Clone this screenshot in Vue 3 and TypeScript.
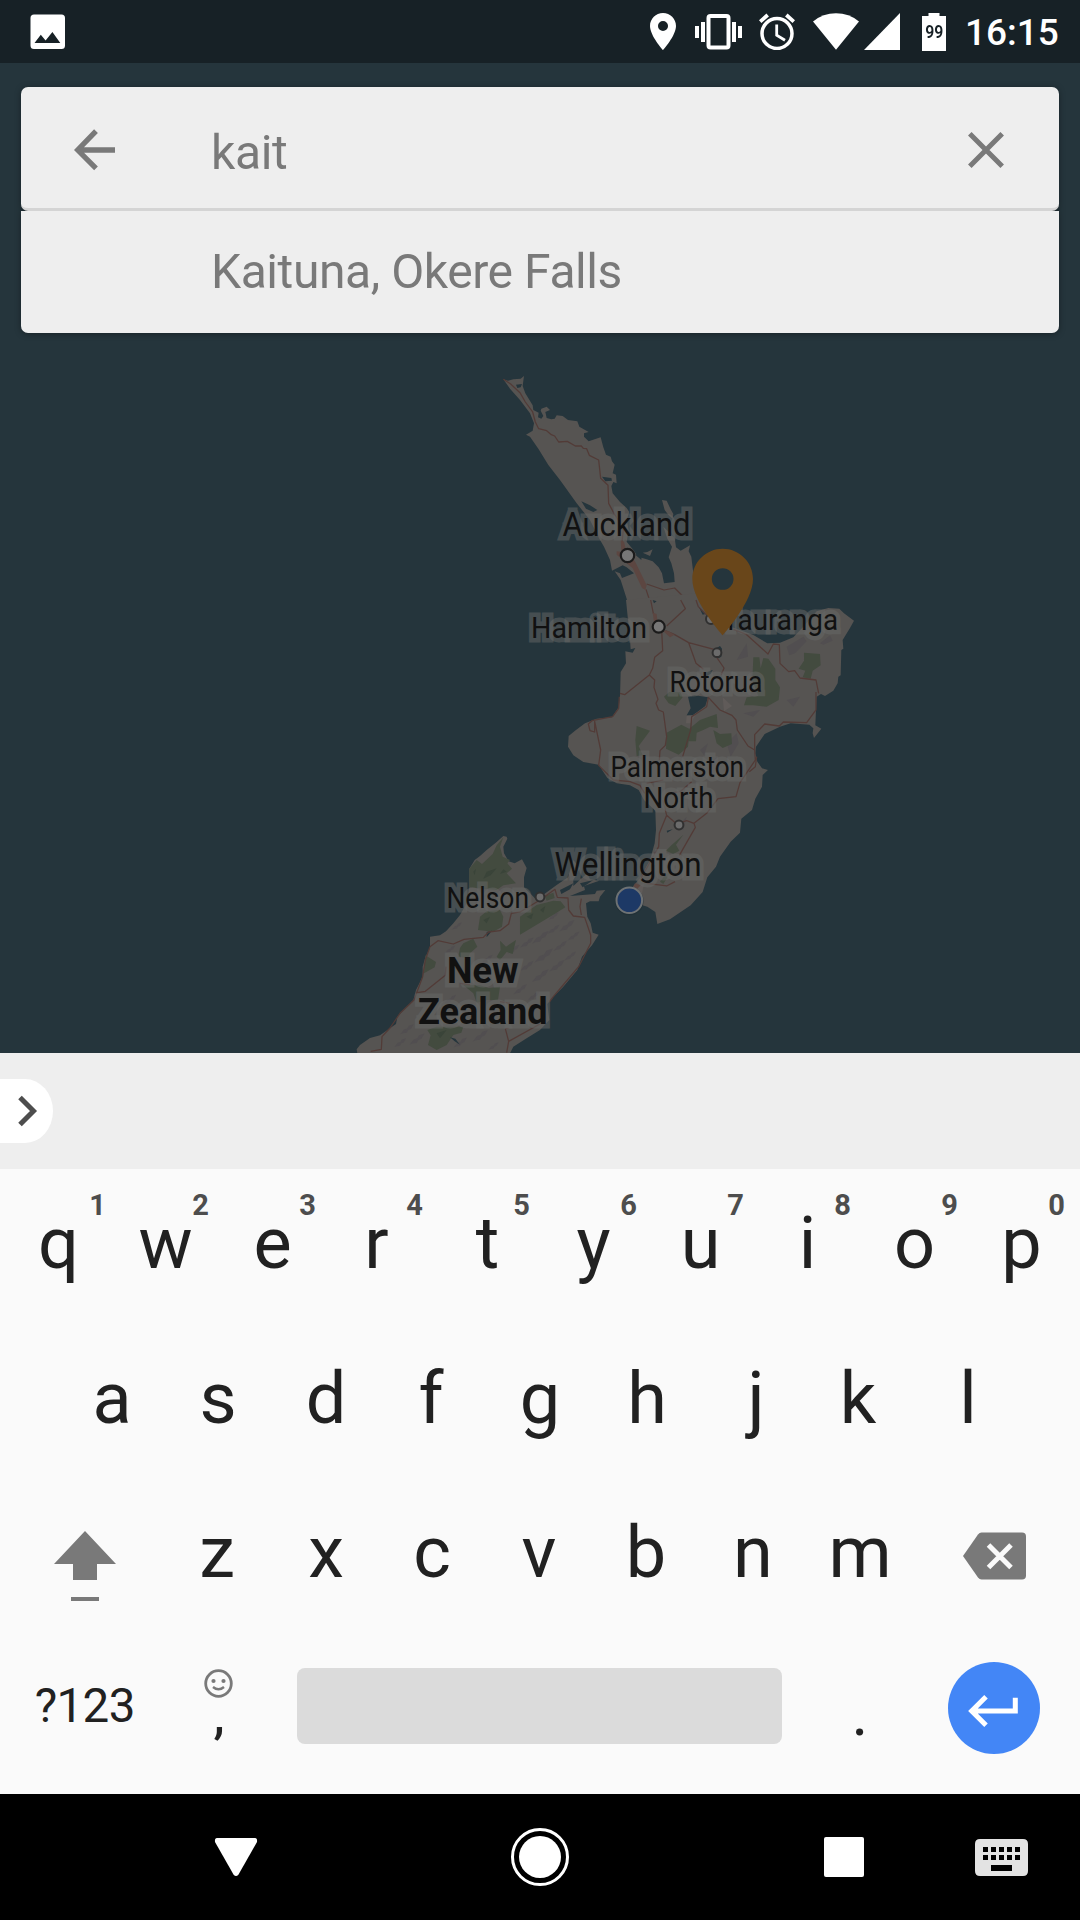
<script setup lang="ts">
interface Key {
  label: string
  hint?: string
}

interface MapLabel {
  text: string
  x: number
  y: number
  width: number
  size: number
  bold?: boolean
}

const topRow: Key[] = 'qwertyuiop'.split('').map((label, i) => ({ label, hint: String((i + 1) % 10) }))
const middleRow: string[] = 'asdfghjkl'.split('')
const bottomRow: string[] = 'zxcvbnm'.split('')

// Optical centring of glyphs whose side bearings are uneven.
const nudges: Record<string, number> = { r: -3, t: 1, f: -2, j: 2, k: -3, s: -1, z: -1, x: 1 }
const nudge = (label: string) => ({ left: `${nudges[label] ?? 0}px` })

const query = 'kait'
const suggestion = 'Kaituna, Okere Falls'

const labels: MapLabel[] = [
  { text: 'Auckland', x: 562.5, y: 535.6, width: 128, size: 33.5 },
  { text: 'Hamilton', x: 531, y: 638, width: 116, size: 29 },
  { text: 'Tauranga', x: 722.5, y: 630, width: 115.5, size: 29 },
  { text: 'Rotorua', x: 669.5, y: 692, width: 93, size: 29 },
  { text: 'Palmerston', x: 610.5, y: 776.7, width: 133.5, size: 29 },
  { text: 'North', x: 643.5, y: 808, width: 70, size: 29 },
  { text: 'Wellington', x: 554.5, y: 875.7, width: 147, size: 33.5 },
  { text: 'Nelson', x: 446.5, y: 907.5, width: 82.5, size: 29 },
  { text: 'New', x: 447, y: 982.9, width: 71.5, size: 37.5, bold: true },
  { text: 'Zealand', x: 418, y: 1023.6, width: 129.5, size: 37.5, bold: true },
]

const ridges: [number, number, number][] = [
  [420, 300, 0.7], [470, 285, 0.8], [560, 430, 0.8], [600, 415, 1], [640, 390, 0.7], [680, 380, 0.9],
  [610, 470, 1.1], [660, 440, 0.8], [700, 410, 0.7], [560, 500, 0.8], [600, 530, 1], [650, 500, 0.9],
  [690, 470, 0.7], [540, 570, 0.8], [580, 590, 0.7], [510, 520, 0.6], [440, 480, 0.7], [330, 450, 0.6],
  [400, 520, 0.7], [330, 600, 0.7], [200, 690, 0.8], [230, 720, 0.9], [180, 730, 0.7], [360, 730, 0.8],
  [420, 710, 0.9], [250, 660, 0.7], [460, 740, 0.6], [350, 380, 0.6], [520, 450, 0.7], [640, 350, 0.6],
]
</script>

<template>
  <div class="screen">
    <header class="status">
      <svg class="shot" width="36" height="36" viewBox="0 0 36 36">
        <path fill="#fff" fill-rule="evenodd" d="M4 .5h27.500q3.500 0 3.500 3.500v27.500q0 3.500-3.500 3.500H4q-3.500 0-3.500-3.500V4Q.5.5 4 .5zM4.500 29H30.300L22.400 18 15.600 26.400 10.800 20.700z" />
      </svg>
      <div class="indicators">
        <svg width="26" height="37" viewBox="5 2 14 20" preserveAspectRatio="none" fill="#fff">
          <path d="M12 2C8.130 2 5 5.130 5 9c0 5.250 7 13 7 13s7-7.750 7-13c0-3.870-3.130-7-7-7zm0 9.700a2.700 2.700 0 1 1 0-5.400 2.700 2.700 0 0 1 0 5.400z" />
        </svg>
        <svg class="vibrate" width="47" height="36" viewBox="0 0 47 36" fill="#fff">
          <path d="M0 12h4v12H0zM6 8h4v20H6zM37 8h4v20h-4zM43 12h4v12h-4z" />
          <rect x="13.500" y="2" width="20" height="31.500" rx="2" fill="none" stroke="#fff" stroke-width="4" />
        </svg>
        <svg class="alarm" width="36" height="37" viewBox="0 0 36 37" fill="none" stroke="#fff">
          <circle cx="18" cy="20.500" r="15" stroke-width="3.500" />
          <path d="M17.700 11.500v10.700l8.300 5" stroke-width="2.800" />
          <path d="M1.200 8.600 8.700 2M34.800 8.600 27.300 2" stroke-width="3.800" />
        </svg>
        <svg class="wifi" width="46" height="37" viewBox="0 0 46 37" fill="#fff">
          <path d="M0 8.500Q10 .3 23 .3T46 8.500L23 36.800z" />
        </svg>
        <svg class="signal" width="36" height="37" viewBox="0 0 36 37" fill="#fff"><path d="M36 0v37H0z" /></svg>
        <div class="battery">
          <svg width="24" height="38" viewBox="0 0 24 38"><path fill="#fff" d="M6.500 0h11v3H24v35H0V3h6.500z" /></svg>
          <span>99</span>
        </div>
        <time class="clock">16:15</time>
      </div>
    </header>

    <main class="map-area">
      <svg class="map" viewBox="0 63 1080 990" width="1080" height="990">
        <!-- Northland and Auckland -->
        <g transform="translate(480 360) scale(.33333)">
          <path class="land" d="M70 58 84 62 100 58 122 56 132 48 128 78 136 100 158 136 160 150 176 158 174 172 184 176 190 168 182 152 184 146 200 140 210 150 196 156 200 174 214 178 224 176 230 166 248 168 264 180 292 184 298 200 326 216 312 220 312 230 326 244 362 232 370 262 378 284 392 290 396 304 404 314 398 340 408 344 410 370 400 366 394 378 398 400 420 426 440 444 448 456 440 480 446 510 440 545 460 570 474 590 500 598 518 604 536 622 546 640 552 670 584 666 582 640 574 610 566 592 576 560 562 536 550 500 570 520 584 534 588 562 602 572 630 556 626 574 634 590 640 640 650 700 680 780 452 780 440 716 422 660 404 634 420 640 426 654 462 640 440 622 428 616 396 632 390 600 372 560 358 536 330 480 290 430 240 360 205 315 176 268 150 230 138 224 158 212 162 190 150 160 120 120 90 86Z" />
          <path class="land" d="M546 420 560 422 572 448 580 462 578 476 566 466 554 450ZM488 578 502 576 518 568 510 588Z" />
          <path class="water" d="M108 74 126 72 122 82 112 84ZM366 350 394 354 396 362 376 364ZM304 424 330 436 352 450 340 456 318 446ZM466 584 486 576 484 600ZM514 716 530 728 520 728Z" />
          <path class="road" d="M70 58 92 72 120 98 136 126 158 156 166 186 176 206 200 212 214 224 224 228 236 246 262 244 286 258 304 258 310 265 320 266 328 286 356 300 362 355 384 376 386 430 404 464 430 510 426 545M500 672 552 690 584 684 608 708 606 730 616 745 575 780M608 714 636 712 656 730 652 750M498 688 512 730 520 775" />
          <path class="town" d="M422 540 432 545 436 562 466 606 500 676 496 690 486 684 458 625 410 584 410 574 424 575ZM518 760 530 760 534 780 520 780Z" />
        </g>

        <!-- Lower North Island -->
        <g transform="translate(520 600) scale(.33333)">
          <path class="land" d="M318 0 322 40 330 120 332 148 346 144 338 158 316 154 318 190 302 216 300 290 296 322 276 352 230 356 195 370 165 392 146 408 144 440 160 466 190 486 236 494 262 534 290 550 330 556 356 570 372 600 406 632 408 690 404 730 390 780 360 835 340 858 338 870 365 915 382 920 406 936 412 972 450 958 512 916 548 876 562 832 588 800 600 770 632 725 660 698 664 656 696 630 706 596 726 560 728 525 744 510 726 505 712 485 706 460 708 440 734 402 780 380 812 370 868 374 880 385 878 400 882 414 904 386 886 376 888 330 890 290 903 282 915 288 940 272 953 250 955 230 962 226 964 150 970 146 968 120 990 84 1002 62 972 40 958 26 925 24 890 34 850 80 820 112 780 128 742 130 700 105 660 90 636 82 590 45 530 -20Z" />
          <g class="relief">
            <path d="M800 140 850 110 860 124 825 160 808 166ZM900 130 930 106 938 122 910 134ZM620 430 650 400 656 430 632 470ZM560 500 590 470 600 496 570 530ZM470 680 500 650 490 690ZM670 340 720 330 700 350ZM800 300 840 290 820 320ZM540 450 564 430 552 466ZM610 510 640 490 630 530ZM650 180 680 130 684 170Z" />
          </g>
          <path class="pale" d="M608 292 636 318 612 334ZM500 348 530 338 512 370 498 370ZM340 860 372 852 366 880 345 878Z" />
          <path class="forest" d="M700 172 718 172 722 205 730 174 745 176 766 206 766 240 780 262 776 300 740 320 700 316 672 316 680 292 715 288 705 262 697 240ZM852 158 900 162 902 196 878 212 872 236 848 232 856 212 836 206 852 182ZM432 290 448 276 480 276 488 292 466 318 446 310ZM350 378 390 392 374 414 356 438 368 466 350 468 346 420ZM440 398 484 374 510 388 504 440 476 464 438 446ZM508 386 540 360 590 342 594 384 570 380 550 390 530 398 528 424 506 424ZM580 390 600 402 634 400 636 432 608 444 590 430ZM490 704 468 734 478 752 460 762 438 752 455 735ZM420 845 440 820 450 820 430 852Z" />
          <path class="water" d="M504 290 524 286 564 292 556 318 540 330 518 346 500 346 512 325ZM586 146 600 138 606 146 604 170 592 176ZM562 216 578 210 572 222 560 228ZM440 692 458 688 442 698ZM398 0 410 4 402 10ZM536 20 556 42 548 44Z" />
          <path class="road" d="M392 0 400 40 425 90 428 152 404 172 398 205 388 225 314 284 300 280M388 225 404 240 402 262 414 298 408 310 416 330 430 336 440 410 436 436 420 452 418 480M482 0 496 26 440 78M528 0 535 20 560 45M436 92 464 104 506 128 582 148M506 128 528 190 550 208M590 172 612 204 604 225M298 290 296 325 278 350 216 362 205 372 210 392 224 396 224 364 242 450 236 496 280 540 330 545 360 556 374 580M640 88 680 104 720 140 744 162 760 132 778 134 780 190 806 215 824 212 840 234 888 240 896 280M888 276 888 330 860 368 790 366 778 378 734 372 704 404 704 450 684 438 652 390 648 360 636 346 600 330 565 292 560 320 515 350 512 390 488 470M704 450 706 480 660 548 648 590 594 596 560 640 522 670 500 662 470 672 440 646 418 700 416 740 360 840M522 670 526 682 478 766M428 600 440 646M710 470 706 500 688 515M380 850 440 858 465 845M380 550 430 540M515 545 480 575 460 578" />
          <path class="town" d="M398 38 410 42 412 62 402 66ZM428 92 446 94 464 104 450 112ZM345 850 362 856 352 866 340 860Z" />
        </g>

        <!-- South Island -->
        <g transform="translate(340 800) scale(.33333)">
          <path class="land" d="M500 110 490 108 470 126 440 150 420 168 404 180 388 206 388 262 380 310 360 345 340 370 318 394 300 406 270 410 270 444 256 472 248 500 248 530 228 570 220 600 172 650 168 672 120 706 90 714 60 735 50 748 52 760 510 760 520 740 560 715 600 690 628 660 622 612 640 590 670 560 712 510 726 470 756 436 776 404 758 398 752 370 742 350 738 310 750 304 776 304 780 290 796 270 770 272 765 282 690 288 735 270 732 258 778 242 750 238 742 220 725 235 700 258 700 240 720 205 700 180 684 232 650 255 616 280 590 300 570 280 552 262 552 232 560 204 546 178 524 190 506 184 492 160 490 140 502 116Z" />
          <path class="water" d="M660 270 700 250 690 268 664 282ZM720 250 760 240 728 262Z" />
          <g class="relief">
            <path v-for="([x, y, s], i) in ridges" :key="i" :transform="`translate(${x} ${y}) scale(${s})`" d="M-24 16-10-2 2-6 8-16 26-22 16-4 6 0 0 10-14 12Z" />
          </g>
          <path class="forest" d="M490 112 480 140 488 170 510 180 502 190 516 206 500 220 528 250 490 256 470 270 388 262 388 206 410 180 426 192 458 162 470 136ZM420 350 440 334 480 330 490 350 486 380 460 395 414 390ZM540 350 590 315 640 302 662 304 676 322 640 344 600 368 540 404ZM614 288 640 278 644 294 620 302ZM256 466 288 486 284 502 252 520ZM370 430 400 416 412 440 390 460 385 474 355 470 360 444ZM480 422 498 440 528 420 518 462 500 456 480 480 470 470 482 450ZM370 555 420 556 446 564 480 560 474 600 440 600 410 608 400 580ZM262 690 290 680 370 680 364 698 340 705 320 735 290 750 264 735 272 706Z" />
          <path class="relief-dark" d="M440 215 470 205 452 226 430 236ZM400 215 408 206 404 226ZM560 350 580 340 574 358ZM600 330 616 318 610 338ZM490 208 500 215 480 222ZM430 360 450 350 440 370ZM290 700 320 690 300 715Z" />
          <path class="water" d="M330 712 346 716 360 734 344 724ZM440 396 456 392 440 412Z" />
          <path class="road" d="M92 754 124 748 126 710 150 684 180 640 222 600 248 530 256 480 270 440 294 422 340 432 372 418 430 412 446 396 480 392 506 372 514 340 540 336 600 300 645 268 652 292 684 294 686 330 700 348 734 352 752 405 752 430 716 500 672 552 640 590 628 606M232 578 256 574 316 526 318 500M496 686 506 724 500 758M496 686 506 684M506 724 600 672M724 296 720 320 724 345M360 550 390 555M480 605 510 610" />
        </g>

        <g class="places">
          <circle cx="627.500" cy="555.500" r="6.700" />
          <circle cx="658.700" cy="626.700" r="6" />
          <circle class="minor" cx="711" cy="619" r="5" />
          <circle class="minor" cx="717" cy="652.700" r="4.400" />
          <circle class="minor" cx="679" cy="825" r="4.400" />
          <circle class="minor" cx="540" cy="897" r="4.400" />
        </g>

        <g class="labels">
          <text
            v-for="l in labels"
            :key="l.text"
            :x="l.x"
            :y="l.y"
            :font-size="l.size"
            :font-weight="l.bold ? 700 : 400"
            :textLength="l.width"
            lengthAdjust="spacingAndGlyphs"
          >{{ l.text }}</text>
        </g>

        <circle cx="629.300" cy="901" r="14.300" fill="#1c2b31" opacity=".5" />
        <circle cx="629.300" cy="900.300" r="12.800" fill="#1d3966" stroke="#6e7274" stroke-width="2" />
        <path class="pin" transform="translate(670.670 540) scale(4.333)" d="M12 2C8.130 2 5 5.130 5 9c0 5.250 7 13 7 13s7-7.750 7-13c0-3.870-3.130-7-7-7zm0 9.500a2.500 2.500 0 1 1 0-5 2.500 2.500 0 0 1 0 5z" />
      </svg>

      <section class="search">
        <div class="field">
          <svg class="back" width="42" height="42" viewBox="0 0 42 42" fill="none" stroke="#797979" stroke-width="5.300">
            <path d="M41 21H5M22 2.200 3.700 21 22 39.300" />
          </svg>
          <span class="query">{{ query }}</span>
          <svg class="clear" width="36" height="36" viewBox="0 0 36 36" stroke="#797979" stroke-width="5"><path d="m1.800 1.800 32.400 32.400m0-32.400L1.800 34.200" /></svg>
        </div>
        <div class="result">{{ suggestion }}</div>
      </section>
    </main>

    <section class="strip">
      <div class="expand">
        <svg width="20" height="32" viewBox="0 0 20 32" fill="none" stroke="#4d4d4d" stroke-width="5"><path d="M2 2.500 15.500 16 2 29.500" /></svg>
      </div>
    </section>

    <section class="keyboard">
      <div class="row">
        <div v-for="k in topRow" :key="k.label" class="key">
          <span class="glyph" :style="nudge(k.label)">{{ k.label }}</span>
          <sup :class="{ first: k.hint === '1' }">{{ k.hint }}</sup>
        </div>
      </div>
      <div class="row inset">
        <div v-for="k in middleRow" :key="k" class="key"><span class="glyph" :style="nudge(k)">{{ k }}</span></div>
      </div>
      <div class="row">
        <div class="key wide">
          <svg class="shift" width="64" height="72" viewBox="0 0 64 72" fill="#797979"><path d="M32 0 63 33H44v16H20V33H1zM18 66h28v4H18z" /></svg>
        </div>
        <div v-for="k in bottomRow" :key="k" class="key"><span class="glyph" :style="nudge(k)">{{ k }}</span></div>
        <div class="key wide">
          <svg class="erase" width="63" height="48" viewBox="0 0 63 48">
            <path fill="#797979" d="M18.500.5H59q4 0 4 4v39q0 4-4 4H18.500q-2 0-3.500-2L0 24 15 2.500q1.500-2 3.500-2z" />
            <path stroke="#fafafa" stroke-width="5" d="m25.500 13 22.500 22.500m0-22.500L25.500 35.500" />
          </svg>
        </div>
      </div>
      <div class="row">
        <div class="key wide symbols">?123</div>
        <div class="key punct">
          <svg class="smile" width="29" height="29" viewBox="0 0 29 29" fill="none" stroke="#797979">
            <circle cx="14.500" cy="14.500" r="12.800" stroke-width="2.800" />
            <path d="M9 18q5.500 4.500 11 0" stroke-width="2.400" />
            <g fill="#797979" stroke="none"><circle cx="9.500" cy="12" r="2.100" /><circle cx="19.500" cy="12" r="2.100" /></g>
          </svg>
          <span class="comma">,</span>
        </div>
        <div class="space"></div>
        <div class="key punct"><span>.</span></div>
        <div class="key wide">
          <div class="enter">
            <svg width="50" height="32" viewBox="0 0 50 32" fill="none" stroke="#fff" stroke-width="5"><path d="M47.300 2.700v13.300H5M18 1.800 3.700 16 18 30.200" /></svg>
          </div>
        </div>
      </div>
    </section>

    <nav class="nav">
      <svg width="1080" height="126" viewBox="0 1794 1080 126" fill="#fff">
        <path d="M217 1838h38q2.500 0 2 4l-18.500 32.500q-2.500 3-5 0L215 1842q-.5-4 2-4z" />
        <circle cx="540" cy="1857" r="27.500" fill="none" stroke="#fff" stroke-width="3" />
        <circle cx="540" cy="1857" r="21" />
        <rect x="824" y="1837" width="40" height="40" rx="2" />
        <g fill="#e3e3e3">
          <path fill-rule="evenodd" d="M980 1839h43q5 0 5 5v27q0 5-5 5h-43q-5 0-5-5v-27q0-5 5-5zM983 1847v5h5v-5zm8 0v5h5v-5zm8 0v5h5v-5zm8 0v5h5v-5zm8 0v5h5v-5zM983 1855v5h5v-5zm8 0v5h5v-5zm8 0v5h5v-5zm8 0v5h5v-5zm8 0v5h5v-5zM991 1865v6h21v-6z" />
        </g>
      </svg>
    </nav>
  </div>
</template>

<style>
body {
  margin: 0;
}
</style>

<style scoped>
.screen {
  width: 1080px;
  height: 1920px;
  display: flex;
  flex-direction: column;
  overflow: hidden;
  font-family: Roboto, 'Liberation Sans', sans-serif;
  background: #25353c;
}
.screen svg {
  display: block;
  flex: none;
}
.status {
  height: 63px;
  flex: none;
  display: flex;
  justify-content: space-between;
  align-items: center;
  padding: 0 20px 0 30px;
  background: #172126;
}
.indicators {
  display: flex;
  align-items: center;
}
.vibrate { margin-left: 19px; }
.alarm { margin-left: 17px; }
.wifi { margin-left: 18px; }
.signal { margin: 0 22px 0 5px; }
.battery {
  width: 24px;
  display: grid;
  place-items: center;
}
.battery > * { grid-area: 1 / 1; }
.battery span {
  font-size: 18px;
  font-weight: 600;
  line-height: 20px;
  color: #172126;
  transform: scaleX(0.88);
}
.clock {
  width: 95px;
  margin-left: 19px;
  padding-top: 2px;
  font-size: 37px;
  font-weight: 500;
  line-height: 40px;
  color: #fff;
}
.map-area {
  height: 990px;
  flex: none;
  position: relative;
  padding: 24px 21px 0;
  box-sizing: border-box;
}
.map {
  position: absolute;
  left: 0;
  top: 0;
}
.land { fill: #565452; }
.water { fill: #25353c; }
.forest { fill: #434b3f; }
.relief { fill: #514e50; }
.relief-dark { fill: #3a4439; }
.pale { fill: #605b59; }
.road {
  fill: none;
  stroke: #523b37;
  stroke-width: 3.8;
  stroke-linejoin: round;
}
.town { fill: #5c4641; }
.places circle {
  fill: #777;
  stroke: #1b1b1b;
  stroke-width: 2.2;
}
.places .minor {
  fill: #6b6b6b;
  stroke: #303030;
  stroke-width: 2;
}
.labels text {
  fill: #111;
  stroke: rgba(103, 104, 103, 0.5);
  stroke-width: 9px;
  stroke-linejoin: miter;
  stroke-miterlimit: 2;
  paint-order: stroke;
}
.pin { fill: #69461a; }
.search {
  position: relative;
  color: #797979;
  font-size: 48px;
  filter: drop-shadow(0 1px 3px rgba(0, 0, 0, 0.35));
}
.field {
  height: 124px;
  box-sizing: border-box;
  border-bottom: 3px solid #d4d4d4;
  border-radius: 7px;
  background: #eee;
  display: flex;
  align-items: center;
  padding: 0 55px 0 53px;
}
.query {
  flex: 1;
  margin-left: 95px;
  padding-top: 9px;
  letter-spacing: -0.4px;
}
.back { margin-top: 4px; }
.clear { margin-top: 4px; }
.result {
  height: 122px;
  line-height: 122px;
  padding-left: 190px;
  letter-spacing: -0.43px;
  background: #eee;
  border-radius: 0 0 7px 7px;
}
.strip {
  height: 116px;
  flex: none;
  display: flex;
  align-items: center;
  background: #eee;
  position: relative;
  z-index: 1;
}
.expand {
  width: 53px;
  height: 64px;
  box-sizing: border-box;
  padding: 16px 0 0 18px;
  border-radius: 0 28px 28px 0 / 0 32px 32px 0;
  background: #fff;
}
.keyboard {
  height: 625px;
  flex: none;
  display: flow-root;
  background: #fafafa;
  color: #212121;
}
.row {
  height: 154.5px;
  display: flex;
  padding: 0 5px;
}
.row:first-child { margin-top: -3px; }
.row.inset { padding: 0 58.5px; }
.key {
  width: 107px;
  flex: none;
  position: relative;
  display: flex;
  align-items: center;
  justify-content: center;
  font-size: 72px;
  line-height: 1;
}
.glyph {
  position: relative;
  padding-top: 2px;
}
.key.wide { width: 159.5px; }
.key sup {
  position: absolute;
  top: 24px;
  right: 10px;
  font-size: 29px;
  font-weight: 700;
  line-height: 30px;
  color: #4d4d4d;
}
.key sup.first { right: 6px; }
.shift { margin-top: 29px; }
.erase { margin: 7px 0 0 3px; }
.key.symbols {
  font-size: 47.5px;
  letter-spacing: -0.6px;
}
.key.punct {
  flex-direction: column;
  justify-content: flex-end;
  font-size: 64px;
}
.smile { margin-bottom: -18px; }
.punct span {
  line-height: 72px;
  padding-bottom: 34px;
}
.punct .comma {
  padding: 0 0 32px 2px;
  font-size: 50px;
  font-weight: 500;
}
.space {
  width: 485px;
  height: 76px;
  margin: 38.5px 25px 0;
  border-radius: 8px;
  background: #dbdbdb;
}
.enter {
  width: 92px;
  height: 92px;
  margin: 3px 0 0 2px;
  border-radius: 50%;
  background: #4386f6;
  display: flex;
  align-items: center;
  justify-content: center;
}
.enter svg { margin: 6px 2px 0 0; }
.nav {
  height: 126px;
  flex: none;
  background: #000;
}
</style>
